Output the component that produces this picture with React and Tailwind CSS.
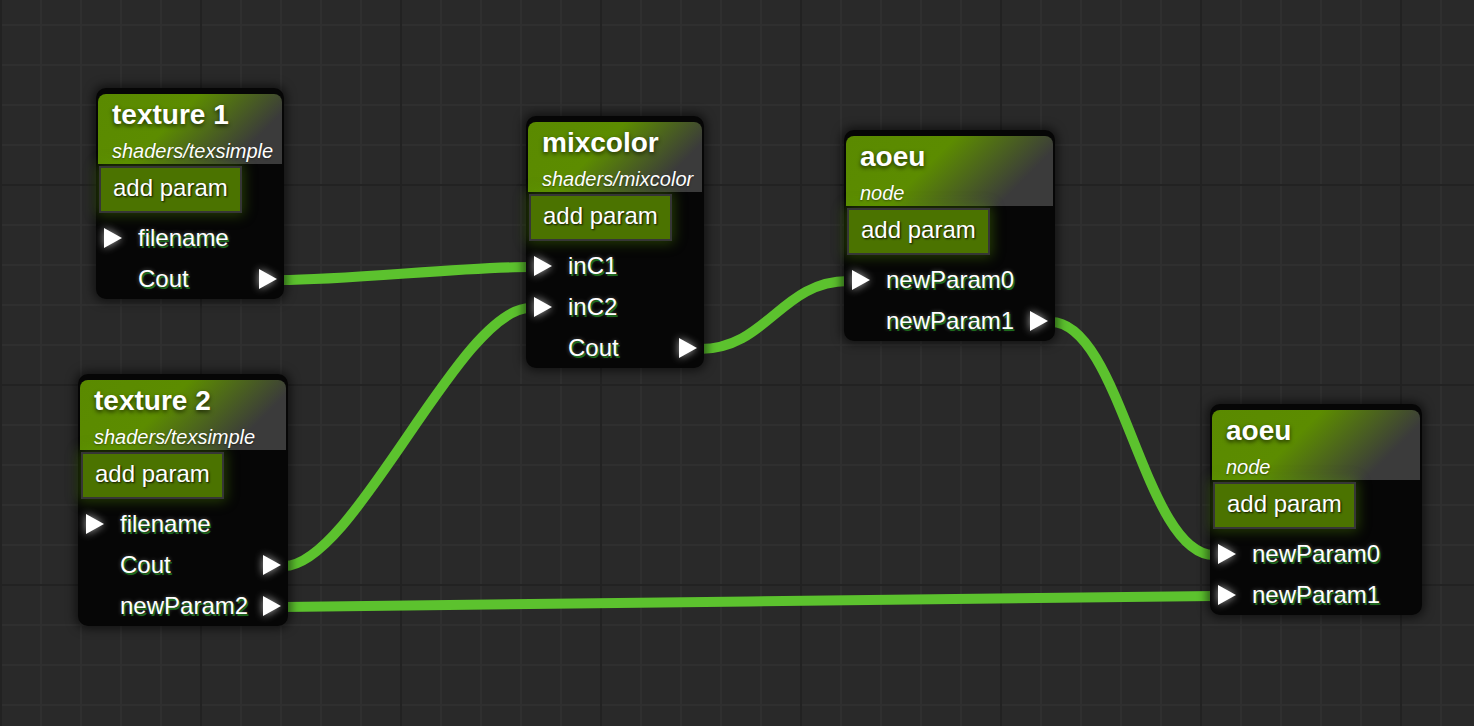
import React from "react";

const NODES = [
  {
    id: "t1",
    title: "texture 1",
    sub: "shaders/texsimple",
    x: 96,
    y: 88,
    w: 188,
    pos: "left-[96px] top-[88px] w-[188px]",
    rows: [
      { name: "filename", input: true },
      { name: "Cout", output: true },
    ],
  },
  {
    id: "mix",
    title: "mixcolor",
    sub: "shaders/mixcolor",
    x: 526,
    y: 116,
    w: 178,
    pos: "left-[526px] top-[116px] w-[178px]",
    rows: [
      { name: "inC1", input: true },
      { name: "inC2", input: true },
      { name: "Cout", output: true },
    ],
  },
  {
    id: "a1",
    title: "aoeu",
    sub: "node",
    x: 844,
    y: 130,
    w: 211,
    pos: "left-[844px] top-[130px] w-[211px]",
    rows: [
      { name: "newParam0", input: true },
      { name: "newParam1", output: true },
    ],
  },
  {
    id: "t2",
    title: "texture 2",
    sub: "shaders/texsimple",
    x: 78,
    y: 374,
    w: 210,
    pos: "left-[78px] top-[374px] w-[210px]",
    rows: [
      { name: "filename", input: true },
      { name: "Cout", output: true },
      { name: "newParam2", output: true },
    ],
  },
  {
    id: "a2",
    title: "aoeu",
    sub: "node",
    x: 1210,
    y: 404,
    w: 212,
    pos: "left-[1210px] top-[404px] w-[212px]",
    rows: [
      { name: "newParam0", input: true },
      { name: "newParam1", input: true },
    ],
  },
];

const LINKS = [
  ["t1", 1, "mix", 0],
  ["t2", 1, "mix", 1],
  ["mix", 2, "a1", 0],
  ["a1", 1, "a2", 0],
  ["t2", 2, "a2", 1],
];

const byId = Object.fromEntries(NODES.map((n) => [n.id, n]));
const rowY = (n, i) => n.y + 149.5 + 41 * i + 1.5;

function wirePath([a, ai, b, bi]) {
  const na = byId[a];
  const nb = byId[b];
  const x1 = na.x + na.w - 4;
  const y1 = rowY(na, ai);
  const x2 = nb.x + 4;
  const y2 = rowY(nb, bi);
  const k = Math.min(Math.abs(x2 - x1) * 0.45, 70);
  return `M ${x1} ${y1} C ${x1 + k} ${y1}, ${x2 - k} ${y2}, ${x2} ${y2}`;
}

function Tri() {
  return (
    <svg
      width="18"
      height="20"
      viewBox="0 0 18 20"
      className="block [filter:drop-shadow(0_0_4px_rgba(255,255,255,0.65))]"
    >
      <polygon points="0,0 18,10 0,20" fill="#ffffff" />
    </svg>
  );
}

function Node({ node }) {
  return (
    <div
      className={`absolute ${node.pos} rounded-[10px] bg-[#060606] px-[2px] pt-[6px] shadow-[0_0_10px_3px_rgba(0,0,0,0.55)]`}
    >
      <div className="h-[70px] rounded-t-[8px] bg-[linear-gradient(135deg,#5a8a00_0%,#5c8c00_40%,#3b3b3b_80%)] pl-[14px] pr-[4px]">
        <div className="pt-[4px] text-[28px] leading-[34px] font-bold text-white whitespace-nowrap [text-shadow:0_2px_4px_rgba(0,0,0,0.65)]">
          {node.title}
        </div>
        <div className="mt-[7px] text-[20px] leading-[24px] italic text-white whitespace-nowrap [text-shadow:0_1px_2px_rgba(0,0,0,0.45)]">
          {node.sub}
        </div>
      </div>
      <div className="mt-[2px] ml-[1px] inline-flex h-[47px] items-center border-2 border-[#363636] bg-[#4b7300] px-[12px] pb-[3px] text-[24px] leading-none text-white whitespace-nowrap shadow-[0_0_12px_2px_rgba(96,170,0,0.35)] [text-shadow:1px_1px_2px_rgba(0,0,0,0.85)]">
        add param
      </div>
      <div className="mt-[4px]">
        {node.rows.map((r, i) => (
          <div key={i} className="flex h-[41px] items-center pl-[6px] pr-[5px]">
            <div className="w-[34px] shrink-0">{r.input ? <Tri /> : null}</div>
            <div className="text-[24px] leading-none text-white whitespace-nowrap [text-shadow:1.5px_2px_0_#1d6b1d,0_0_4px_rgba(255,255,255,0.35)]">
              {r.name}
            </div>
            <div className="ml-auto">{r.output ? <Tri /> : null}</div>
          </div>
        ))}
      </div>
    </div>
  );
}

export default function App() {
  return (
    <div className="relative h-[726px] w-[1474px] overflow-hidden bg-[#292929] bg-[image:linear-gradient(to_right,#222222_2px,transparent_2px),linear-gradient(to_bottom,#222222_2px,transparent_2px),linear-gradient(to_right,#2f2f2f_2px,transparent_2px),linear-gradient(to_bottom,#2f2f2f_2px,transparent_2px)] bg-[length:200px_200px,200px_200px,40px_40px,40px_40px] bg-[position:0_-16px] font-['Liberation_Sans',Arial,sans-serif]">
      <svg
        className="absolute left-0 top-0"
        width="1474"
        height="726"
        viewBox="0 0 1474 726"
      >
        {LINKS.map((l, i) => (
          <path
            key={i}
            d={wirePath(l)}
            fill="none"
            stroke="#5cc22e"
            strokeWidth="10"
          />
        ))}
      </svg>
      {NODES.map((n) => (
        <Node key={n.id} node={n} />
      ))}
    </div>
  );
}
